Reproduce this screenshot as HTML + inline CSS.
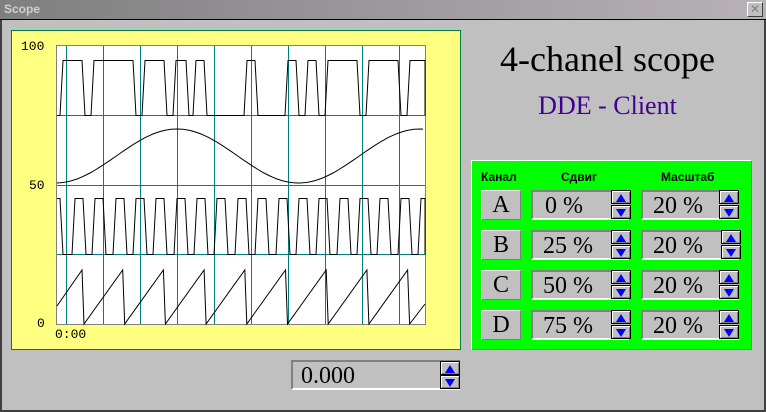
<!DOCTYPE html>
<html><head><meta charset="utf-8"><style>
*{margin:0;padding:0;box-sizing:border-box}
body{width:766px;height:412px;background:#c0c0c0;position:relative;overflow:hidden;font-family:"Liberation Serif",serif}
.a{position:absolute}
.tb{left:0;top:0;width:766px;height:20px;background:linear-gradient(90deg,#7f7f7f,#b8b2b8);border-bottom:1px solid #000}
.tt{left:4px;top:2px;font:bold 12px "Liberation Sans",sans-serif;color:#d0d0d0}
.x{left:747px;top:2px;width:16px;height:15px;background:#c0c0c0;border:1px solid;border-color:#fff #404040 #404040 #fff;font:12px "Liberation Sans";color:#808080;text-align:center;line-height:12px}
.btn{width:40px;height:30px;background:#c0c0c0;border:1px solid;border-color:#fff #808080 #808080 #fff;font-size:24px;text-align:center;line-height:28px}
.fld{height:30px;background:#c0c0c0;border-top:2px solid #808080;border-left:2px solid #808080;border-bottom:2px solid #fff;font-size:24px;line-height:28px}
.sp{width:20px;height:14px;background:#c0c0c0;border:1px solid #000;box-shadow:inset 1px 1px #fff,inset -1px -1px #808080}
.up:after,.dn:after{content:"";position:absolute;left:4px;border-left:5px solid transparent;border-right:5px solid transparent}
.up:after{top:3px;border-bottom:8px solid #00f}
.dn:after{top:3px;border-top:8px solid #00f}
.hd{font:bold 12px "Liberation Sans",sans-serif}
.lb{font:13px "Liberation Mono",monospace}
</style></head><body>
<div class="a tb"></div><div class="a tt">Scope</div><div class="a x">✕</div>
<div class="a" style="left:0;top:20px;width:2px;height:392px;background:#404040"></div>
<div class="a" style="left:764px;top:20px;width:2px;height:392px;background:#404040"></div>
<div class="a" style="left:0;top:410px;width:766px;height:2px;background:#404040"></div>
<div class="a" style="left:11px;top:30px;width:450px;height:320px;background:#ffff80;border:1px solid #008040"></div>
<svg class="a" style="left:0;top:0" width="766" height="412" id="sv">
<rect x="56.5" y="45.5" width="369" height="279" fill="#fff" stroke="#808080"/>
<g id="g" stroke="#008080" stroke-width="1"></g>
<path id="p" fill="none" stroke="#000" stroke-width="1"/>
</svg>
<div class="a lb" style="left:21px;top:39px">100</div>
<div class="a lb" style="left:29px;top:178px">50</div>
<div class="a lb" style="left:37px;top:316px">0</div>
<div class="a lb" style="left:55px;top:327px">0:00</div>
<div class="a" style="left:460px;top:38px;width:295px;text-align:center;font-size:36px">4-chanel scope</div>
<div class="a" style="left:460px;top:91px;width:295px;text-align:center;font-size:26px;color:#400090">DDE - Client</div>
<div class="a" style="left:471px;top:160px;width:281px;height:190px;background:#00ff00;border:1px solid;border-color:#fff #808080 #808080 #fff"></div>
<div class="a hd" style="left:481px;top:170px">Канал</div>
<div class="a hd" style="left:561px;top:170px">Сдвиг</div>
<div class="a hd" style="left:661px;top:170px">Масштаб</div>
<div id="rows"></div>
<div class="a fld" style="left:291px;top:360px;width:169px;padding-left:8px">0.000</div>
<div class="a sp up" style="left:440px;top:361px"></div>
<div class="a sp dn" style="left:440px;top:375px"></div>
<script>
var r='',L=['A','B','C','D'],S=['0 %','25 %','50 %','75 %'];
for(var i=0;i<4;i++){var y=190+i*40;
r+='<div class="a btn" style="left:481px;top:'+y+'px">'+L[i]+'</div>';
r+='<div class="a fld" style="left:531px;top:'+y+'px;width:98px;padding-left:'+(i?10:12)+'px">'+S[i]+'</div>';
r+='<div class="a sp up" style="left:611px;top:'+y+'px"></div><div class="a sp dn" style="left:611px;top:'+(y+15)+'px"></div>';
r+='<div class="a fld" style="left:641px;top:'+y+'px;width:98px;padding-left:10px">20 %</div>';
var sx=i==1?721:719;
r+='<div class="a sp up" style="left:'+sx+'px;top:'+y+'px"></div><div class="a sp dn" style="left:'+sx+'px;top:'+(y+15)+'px"></div>';}
document.getElementById('rows').innerHTML=r;
var g='';[66,103,140,177,214,251,288,325,362,399].forEach(function(x){g+='<line x1="'+(x+.5)+'" y1="46" x2="'+(x+.5)+'" y2="324"/>'});
[115,185,254].forEach(function(y){g+='<line x1="57" y1="'+(y+.5)+'" x2="425" y2="'+(y+.5)+'"/>'});
document.getElementById('g').innerHTML=g;
var d='';
function dig(segs,hi,lo,start){var s='M57 '+(start||lo);segs.forEach(function(q){if(q[0]<=57){s+=' L57 '+hi+' L'+q[1]+' '+hi+' L'+(q[1]+3)+' '+lo;return;}s+=' L'+(q[0]-3)+' '+lo+' L'+q[0]+' '+hi+' L'+q[1]+' '+hi+' L'+Math.min(q[1]+3,425)+' '+lo});return s+' L425 '+lo+' ';}
d+=dig([[63,82],[94,133],[145,164],[176,186],[196,204],[247,255],[288,296],[308,316],[328,357],[369,398],[410,425]],60.5,115.5);
var s3=[[57,60]];for(var k=1;;k++){var st=Math.round(57+20.35*(k-1)+18);if(st>=423)break;s3.push([st,Math.min(425,Math.round(st+8))]);}
d+=dig(s3,198.5,254.5,198.5);
var sn='M57 183';for(var x=57;x<=425;x+=3)sn+=' L'+x+' '+(156-27*Math.cos(2*Math.PI*(x-177)/243)).toFixed(1);d+=sn+' ';
var sw='M57 306';for(var k=0;k<10;k++){var pk=82+k*40.7;if(pk>425){break}sw+=' L'+pk.toFixed(1)+' 270 L'+(pk+2).toFixed(1)+' 324';}
sw+=' L425 304';d+=sw;
document.getElementById('p').setAttribute('d',d);
</script>
</body></html>
